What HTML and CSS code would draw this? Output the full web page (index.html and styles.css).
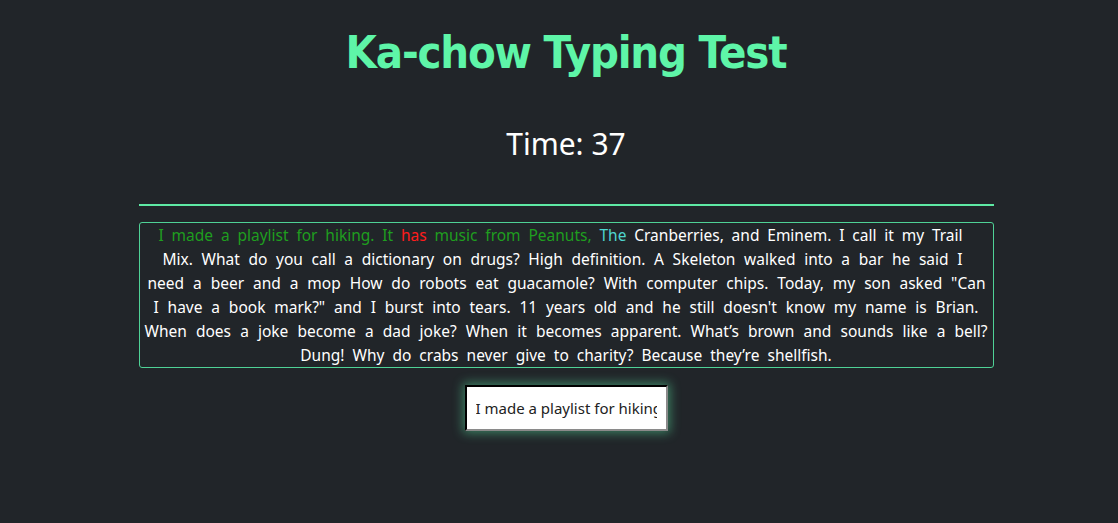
FILE: index.html
```html
<!DOCTYPE html>
<html>
<head>
<meta charset="utf-8">
<title>Ka-chow Typing Test</title>
<link rel="stylesheet" href="styles.css">
</head>
<body>
<main class="app">
  <h1 class="title">Ka-chow Typing Test</h1>
  <div class="timer">Time: 37</div>
  <hr class="divider">
  <p class="quote"><span class="line l1"><span class="ok">I made a playlist for hiking. It</span> <span class="bad">has</span> <span class="ok">music from Peanuts,</span> <span class="cur">The</span> Cranberries, and Eminem. I call it my Trail</span><span class="line l2">Mix. What do you call a dictionary on drugs? High definition. A Skeleton walked into a bar he said I</span><span class="line l3">need a beer and a mop How do robots eat guacamole? With computer chips. Today, my son asked "Can</span><span class="line l4">I have a book mark?" and I burst into tears. 11 years old and he still doesn't know my name is Brian.</span><span class="line l5">When does a joke become a dad joke? When it becomes apparent. What’s brown and sounds like a bell?</span><span class="line last">Dung! Why do crabs never give to charity? Because they’re shellfish.</span></p>
  <div class="entry">
    <input class="typing" type="text" value="I made a playlist for hiking">
  </div>
</main>
</body>
</html>
```
FILE: styles.css
```css
html, body {
  margin: 0;
  padding: 0;
  background: #212529;
  height: 100%;
}
body {
  font-family: "Noto Sans", "Open Sans", sans-serif;
  color: #ffffff;
  padding-left: 14px;
  box-sizing: border-box;
}
.app {
  width: 855px;
  margin: 0 auto;
  padding-top: 26px;
  display: flex;
  flex-direction: column;
  align-items: stretch;
}
.title {
  margin: 0;
  text-align: center;
  font-family: "DejaVu Sans Condensed", "DejaVu Sans", sans-serif;
  font-stretch: condensed;
  font-weight: bold;
  font-size: 45px;
  line-height: 54px;
  color: #5ef5a8;
  letter-spacing: -1.2px;
}
.timer {
  margin-top: 44px;
  text-align: center;
  font-size: 30px;
  line-height: 40px;
}
.divider {
  margin: 40px 0 16px;
  border: 0;
  height: 2px;
  background: #5ee9a4;
}
.quote {
  margin: 0;
  border: 1px solid #4fd296;
  border-radius: 3px;
  padding: 0 5px;
  font-size: 15.5px;
  line-height: 24px;
}
.line {
  display: block;
  text-align: justify;
  text-align-last: justify;
}
.l1 { padding: 0 25px 0 14px; }
.l2 { padding: 0 25px 0 18px; }
.l3 { padding: 0 2px 0 3px; }
.l4 { padding: 0 9px 0 9px; }
.l5 { padding: 0; }
.line.last {
  text-align: center;
  text-align-last: center;
  word-spacing: 4px;
}
.ok { color: #1f9e1f; }
.bad { color: #ff1c1c; }
.cur { color: #4fd6d0; }
.entry {
  display: flex;
  justify-content: center;
  margin-top: 17px;
}
.typing {
  width: 203px;
  height: 46px;
  box-sizing: border-box;
  border: 2px inset #3a3a3a;
  border-top-color: #1c1c1c;
  border-left-color: #1c1c1c;
  border-bottom-color: #8a8a8a;
  border-right-color: #8a8a8a;
  padding: 0 9px;
  font-family: "Noto Sans", sans-serif;
  font-size: 15px;
  color: #222;
  background: #fff;
  box-shadow: 0 0 10px 2px rgba(94, 240, 168, 0.45);
  outline: none;
}
```
